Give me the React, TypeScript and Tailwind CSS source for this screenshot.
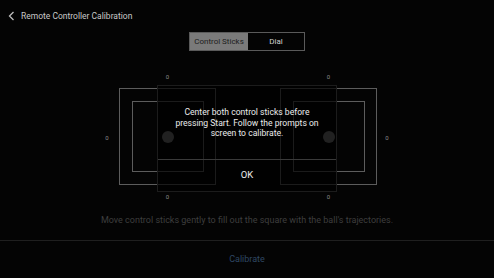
import React from 'react';

const StickPad: React.FC = () => (
  <div className="flex flex-col items-center">
    <span className="h-[10px] text-[6px] leading-[10px] text-[#8a8a8a]">0</span>
    <div className="mt-[6px] w-[97px] h-[97px] border border-[#5c5c5c] flex items-center justify-center relative">
      <div className="w-[72px] h-[71px] border border-[#5c5c5c]" />
      <span className="absolute left-1/2 top-1/2 -translate-x-1/2 -translate-y-1/2 w-[12px] h-[12px] rounded-full bg-[#6e6e6e]" />
    </div>
    <span className="mt-[7px] h-[10px] text-[6px] leading-[10px] text-[#8a8a8a]">0</span>
  </div>
);

const App: React.FC = () => {
  return (
    <div
      className="w-[494px] h-[278px] bg-[#040404] flex flex-col relative overflow-hidden"
      style={{ fontFamily: 'Roboto, "Liberation Sans", sans-serif' }}
    >
      <header className="h-[32px] flex items-center pl-[8px] gap-[5px]">
        <svg width="8" height="10" viewBox="0 0 8 10" fill="none">
          <path d="M5.5 1 L1.5 5 L5.5 9" stroke="#bdbdbd" strokeWidth="1.3" />
        </svg>
        <span className="text-[8.5px] text-[#c8c8c8]">Remote Controller Calibration</span>
      </header>

      <div className="flex justify-center">
        <div className="flex h-[19px] border border-[#5a5a5a] text-[8px]">
          <div className="w-[58px] bg-[#7a7a7a] text-[#1c1c1c] flex items-center justify-center">Control Sticks</div>
          <div className="w-[56px] text-[#d0d0d0] flex items-center justify-center">Dial</div>
        </div>
      </div>

      <div className="mt-[21px] flex justify-center items-center">
        <span className="w-[8px] text-center text-[6px] text-[#8a8a8a]">0</span>
        <div className="ml-[8px]">
          <StickPad />
        </div>
        <div className="ml-[64px]">
          <StickPad />
        </div>
        <span className="ml-[6px] w-[8px] text-center text-[6px] text-[#8a8a8a]">0</span>
      </div>

      <p className="mt-[12px] h-[12px] text-center text-[9px] leading-[12px] text-[#3e3e3e]">
        Move control sticks gently to fill out the square with the ball's trajectories.
      </p>

      <div className="mt-[14px] border-t border-[#1f1f1f] flex-1 flex items-center justify-center">
        <span className="text-[9px] text-[#2f4763]">Calibrate</span>
      </div>

      <div className="absolute left-[157px] top-[85px] w-[180px] h-[107px] bg-black/70 border border-[#1c1c1c] flex flex-col">
        <p className="pt-[21px] px-[6px] h-[73px] text-center text-[8.6px] leading-[10.5px] text-[#ececec]">
          Center both control sticks before
          <br />
          pressing Start. Follow the prompts on
          <br />
          screen to calibrate.
        </p>
        <div className="border-t border-[#3a3a3a] flex-1 flex items-center justify-center">
          <span className="text-[9.5px] text-[#ececec]">OK</span>
        </div>
      </div>
    </div>
  );
};

export default App;
